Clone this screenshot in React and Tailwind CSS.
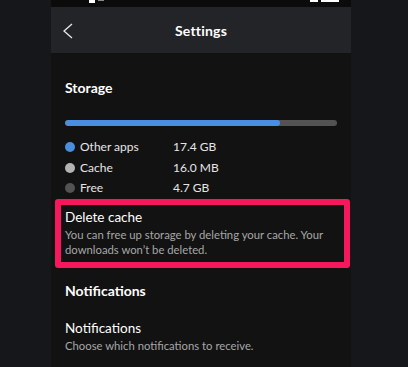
import React from "react";

function Dot({ color }) {
  return <span className={`shrink-0 w-[10px] h-[10px] rounded-full ${color}`} />;
}

function Row({ color, label, value }) {
  return (
    <div className="flex items-center h-[20.5px]">
      <Dot color={color} />
      <span className="ml-[5px] w-[93px] text-[12px] text-[#e6e6e6]">{label}</span>
      <span className="text-[12px] text-[#e6e6e6]">{value}</span>
    </div>
  );
}

export default function App() {
  return (
    <div
      className="w-[408px] h-[367px] bg-[#16171b] overflow-hidden"
      style={{ fontFamily: "Lato, 'Noto Sans', Arial, sans-serif" }}
    >
      <div className="ml-[51px] w-[300px] h-full bg-[#121212] flex flex-col">
        {/* status bar */}
        <div className="h-[7px] bg-[#0b0b0c] relative overflow-hidden">
          <div className="absolute left-[38px] top-0 w-[6px] h-[3px] bg-white" />
          <div className="absolute left-[47px] top-0 w-[6px] h-[1px] bg-[#888]" />
          <div className="absolute left-[259px] top-0 w-[8px] h-[2px] bg-white" />
          <div className="absolute left-[270px] top-0 w-[18px] h-[2px] bg-white" />
        </div>
        {/* header */}
        <div className="h-[46px] bg-[#232428] flex items-center relative">
          <svg
            className="absolute left-[11px] top-[16px]"
            width="11"
            height="16"
            viewBox="0 0 11 16"
            fill="none"
          >
            <path d="M10 1 L2 8 L10 15" stroke="#e8e8e8" strokeWidth="1.3" />
          </svg>
          <div className="w-full text-center text-[14px] font-bold text-white tracking-[0.2px]">
            Settings
          </div>
        </div>
        {/* content */}
        <div className="px-[14px]">
          <div className="mt-[25px] h-[20px] leading-[20px] text-[14px] font-bold text-white">
            Storage
          </div>
          <div className="mt-[22px] h-[6px] rounded-full bg-[#535353] flex overflow-hidden">
            <div className="w-[215px] h-full bg-[#4a8ee0] rounded-full" />
          </div>
          <div className="mt-[11px] flex flex-col">
            <Row color="bg-[#4a8ee0]" label="Other apps" value="17.4 GB" />
            <Row color="bg-[#b3b3b3]" label="Cache" value="16.0 MB" />
            <Row color="bg-[#535353]" label="Free" value="4.7 GB" />
          </div>
        </div>
        <div className="ml-[4px] mr-[1px] border-[6px] border-[#f5185c] rounded-[3px] h-[69px] pl-[4px] pt-[3px]">
          <div className="text-[13.5px] leading-[18px] text-white">Delete cache</div>
          <div className="mt-[1px] text-[11.3px] leading-[15px] text-[#a7a7a7]">
            You can free up storage by deleting your cache. Your downloads won’t be deleted.
          </div>
        </div>
        <div className="px-[14px]">
          <div className="mt-[13px] h-[20px] leading-[20px] text-[14px] font-bold text-white">
            Notifications
          </div>
          <div className="mt-[17px] h-[20px] leading-[20px] text-[13.5px] text-white">
            Notifications
          </div>
          <div className="text-[11.3px] leading-[15px] text-[#a7a7a7]">
            Choose which notifications to receive.
          </div>
        </div>
      </div>
    </div>
  );
}
